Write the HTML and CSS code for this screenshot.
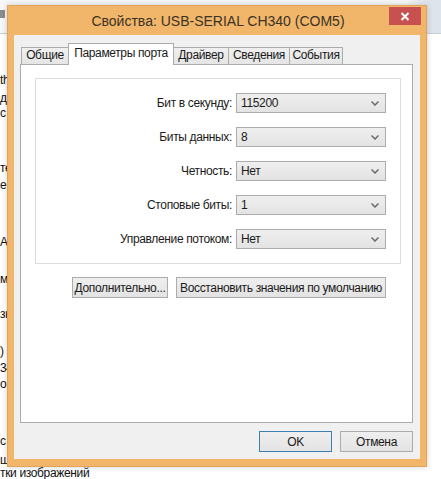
FILE: index.html
```html
<!DOCTYPE html>
<html lang="ru">
<head>
<meta charset="utf-8">
<title>Свойства: USB-SERIAL CH340 (COM5)</title>
<link rel="stylesheet" href="styles.css">
</head>
<body>
<div class="desktop">
  <div class="toolbar"><span class="tb-icon"></span></div>
  <div class="bg-text">
    <div class="bl">th</div>
    <div class="bl">ди</div>
    <div class="bl">с</div>
    <div class="bl">те</div>
    <div class="bl">е</div>
    <div class="bl">А</div>
    <div class="bl">м</div>
    <div class="bl">зы</div>
    <div class="bl">)</div>
    <div class="bl">34</div>
    <div class="bl">о</div>
    <div class="bl">с</div>
    <div class="bl">ш</div>
    <div class="bl">тки изображений</div>
  </div>

  <div class="window">
    <div class="titlebar">
      <div class="title">Свойства: USB-SERIAL CH340 (COM5)</div>
      <div class="close">
        <svg width="10" height="9" viewBox="0 0 10 9"><path d="M1.5 1 L8.5 8 M8.5 1 L1.5 8" stroke="#fff" stroke-width="2" fill="none"/></svg>
      </div>
    </div>
    <div class="body">
      <div class="tabs">
        <div class="tab t-general">Общие</div>
        <div class="tab active t-port">Параметры порта</div>
        <div class="tab t-driver">Драйвер</div>
        <div class="tab t-details">Сведения</div>
        <div class="tab t-events">События</div>
      </div>
      <div class="panel">
        <div class="group">
          <div class="label">Бит в секунду:</div>
          <div class="combo"><span>115200</span><svg class="arrow" width="8" height="5" viewBox="0 0 8 5"><path d="M0.5 0.5 L4 4 L7.5 0.5" stroke="#6a6a6a" stroke-width="1.5" fill="none"/></svg></div>
          <div class="label">Биты данных:</div>
          <div class="combo"><span>8</span><svg class="arrow" width="8" height="5" viewBox="0 0 8 5"><path d="M0.5 0.5 L4 4 L7.5 0.5" stroke="#6a6a6a" stroke-width="1.5" fill="none"/></svg></div>
          <div class="label">Четность:</div>
          <div class="combo"><span>Нет</span><svg class="arrow" width="8" height="5" viewBox="0 0 8 5"><path d="M0.5 0.5 L4 4 L7.5 0.5" stroke="#6a6a6a" stroke-width="1.5" fill="none"/></svg></div>
          <div class="label">Стоповые биты:</div>
          <div class="combo"><span>1</span><svg class="arrow" width="8" height="5" viewBox="0 0 8 5"><path d="M0.5 0.5 L4 4 L7.5 0.5" stroke="#6a6a6a" stroke-width="1.5" fill="none"/></svg></div>
          <div class="label">Управление потоком:</div>
          <div class="combo"><span>Нет</span><svg class="arrow" width="8" height="5" viewBox="0 0 8 5"><path d="M0.5 0.5 L4 4 L7.5 0.5" stroke="#6a6a6a" stroke-width="1.5" fill="none"/></svg></div>
        </div>
        <div class="actions">
          <div class="btn btn-adv">Дополнительно...</div>
          <div class="btn btn-reset">Восстановить значения по умолчанию</div>
        </div>
      </div>
      <div class="footer">
        <div class="btn btn-dlg default">OK</div>
        <div class="btn btn-dlg">Отмена</div>
      </div>
    </div>
  </div>
</div>
</body>
</html>
```

FILE: styles.css
```css
* { box-sizing: border-box; }
html, body { margin: 0; padding: 0; }
body {
  width: 441px;
  height: 479px;
  overflow: hidden;
  background: #ffffff;
  font-family: "Liberation Sans", Arial, sans-serif;
  font-size: 12px;
  letter-spacing: -0.35px;
  color: #1a1a1a;
}
.desktop {
  position: relative;
  width: 441px;
  height: 479px;
  overflow: hidden;
}
.toolbar {
  height: 34px;
  border-bottom: 1px solid #c9ced6;
  background: linear-gradient(to right, #f6f7f8 0, #f6f7f8 92%, #dde4ec 97%, #dde4ec 100%);
  padding: 10px 0 0 0;
}
.tb-icon {
  display: block;
  width: 5px;
  height: 8px;
  background: #8c8c8c;
}
.bg-text {
  display: flex;
  flex-direction: column;
  line-height: 15px;
  font-size: 12px;
  white-space: nowrap;
  color: #111;
}
.bl:nth-child(1) { margin-top: 39px; }
.bl:nth-child(2) { margin-top: 3px; }
.bl:nth-child(3) { margin-top: 0; }
.bl:nth-child(4) { margin-top: 40px; }
.bl:nth-child(5) { margin-top: 2px; }
.bl:nth-child(6) { margin-top: 42px; }
.bl:nth-child(7) { margin-top: 22px; }
.bl:nth-child(8) { margin-top: 20px; }
.bl:nth-child(9) { margin-top: 22px; }
.bl:nth-child(10) { margin-top: 2px; }
.bl:nth-child(11) { margin-top: 1px; }
.bl:nth-child(12) { margin-top: 42px; }
.bl:nth-child(13) { margin-top: 4px; }
.bl:nth-child(14) { margin-top: 0; line-height: 11px; }

/* dialog window on the desktop */
.window {
  position: absolute;
  left: 7px;
  top: 5px;
  width: 420px;
  height: 462px;
  background: #f1b66a;
  border: 1px solid #e2a458;
  padding: 0 6px 7px 6px;
  display: flex;
  flex-direction: column;
  box-shadow: 0 0 6px rgba(0,0,0,0.18);
}
.titlebar {
  position: relative;
  height: 29px;
  display: flex;
  align-items: center;
  justify-content: center;
}
.title {
  font-size: 14px;
  letter-spacing: 0;
  color: #3a3226;
  margin-top: 1px;
  margin-left: 2px;
}
.close {
  position: absolute;
  right: -1px;
  top: 1px;
  width: 32px;
  height: 18px;
  background: #c75050;
  display: flex;
  align-items: center;
  justify-content: center;
}
.body {
  flex: 1;
  background: #f0f0f0;
  padding: 8px 7px 7px 6px;
  display: flex;
  flex-direction: column;
}
.tabs {
  display: flex;
  align-items: flex-end;
  height: 21px;
  padding-left: 1px;
  position: relative;
  z-index: 1;
}
.tab {
  height: 17px;
  line-height: 15px;
  border: 1px solid #acacac;
  border-bottom: none;
  background: linear-gradient(#f0f0f0, #e5e5e5);
  margin-right: -1px;
  white-space: nowrap;
  text-align: center;
}
.t-general { width: 48px; }
.t-port { width: 106px; }
.t-driver { width: 56px; }
.t-details { width: 62px; }
.t-events { width: 54px; }
.tab.active {
  height: 22px;
  line-height: 18px;
  background: #ffffff;
  margin-bottom: -1px;
  position: relative;
  z-index: 2;
}
.panel {
  flex: 1;
  background: #ffffff;
  border: 1px solid #acacac;
  padding: 13px 11px 0 14px;
  display: flex;
  flex-direction: column;
}
.group {
  border: 1px solid #dcdcdc;
  height: 186px;
  padding: 14px 14px 14px 14px;
  display: grid;
  grid-template-columns: 1fr 150px;
  grid-auto-rows: 20px;
  column-gap: 4px;
  row-gap: 14px;
  align-items: center;
}
.label {
  text-align: right;
  white-space: nowrap;
}
.combo {
  height: 20px;
  border: 1px solid #acacac;
  background: linear-gradient(#efefef, #e3e3e3);
  display: flex;
  align-items: center;
  justify-content: space-between;
  padding: 0 6px 0 4px;
}
.arrow { display: block; }
.actions {
  display: flex;
  justify-content: flex-end;
  gap: 8px;
  margin-top: 13px;
  padding-right: 15px;
}
.btn {
  height: 21px;
  border: 1px solid #acacac;
  background: linear-gradient(#efefef, #e3e3e3);
  display: flex;
  align-items: center;
  justify-content: center;
  white-space: nowrap;
}
.btn-adv { width: 96px; }
.btn-reset { width: 210px; }
.footer {
  display: flex;
  justify-content: flex-end;
  gap: 8px;
  margin-top: 8px;
}
.btn-dlg { width: 73px; }
.btn.default { border-color: #3c7fb1; }
```
